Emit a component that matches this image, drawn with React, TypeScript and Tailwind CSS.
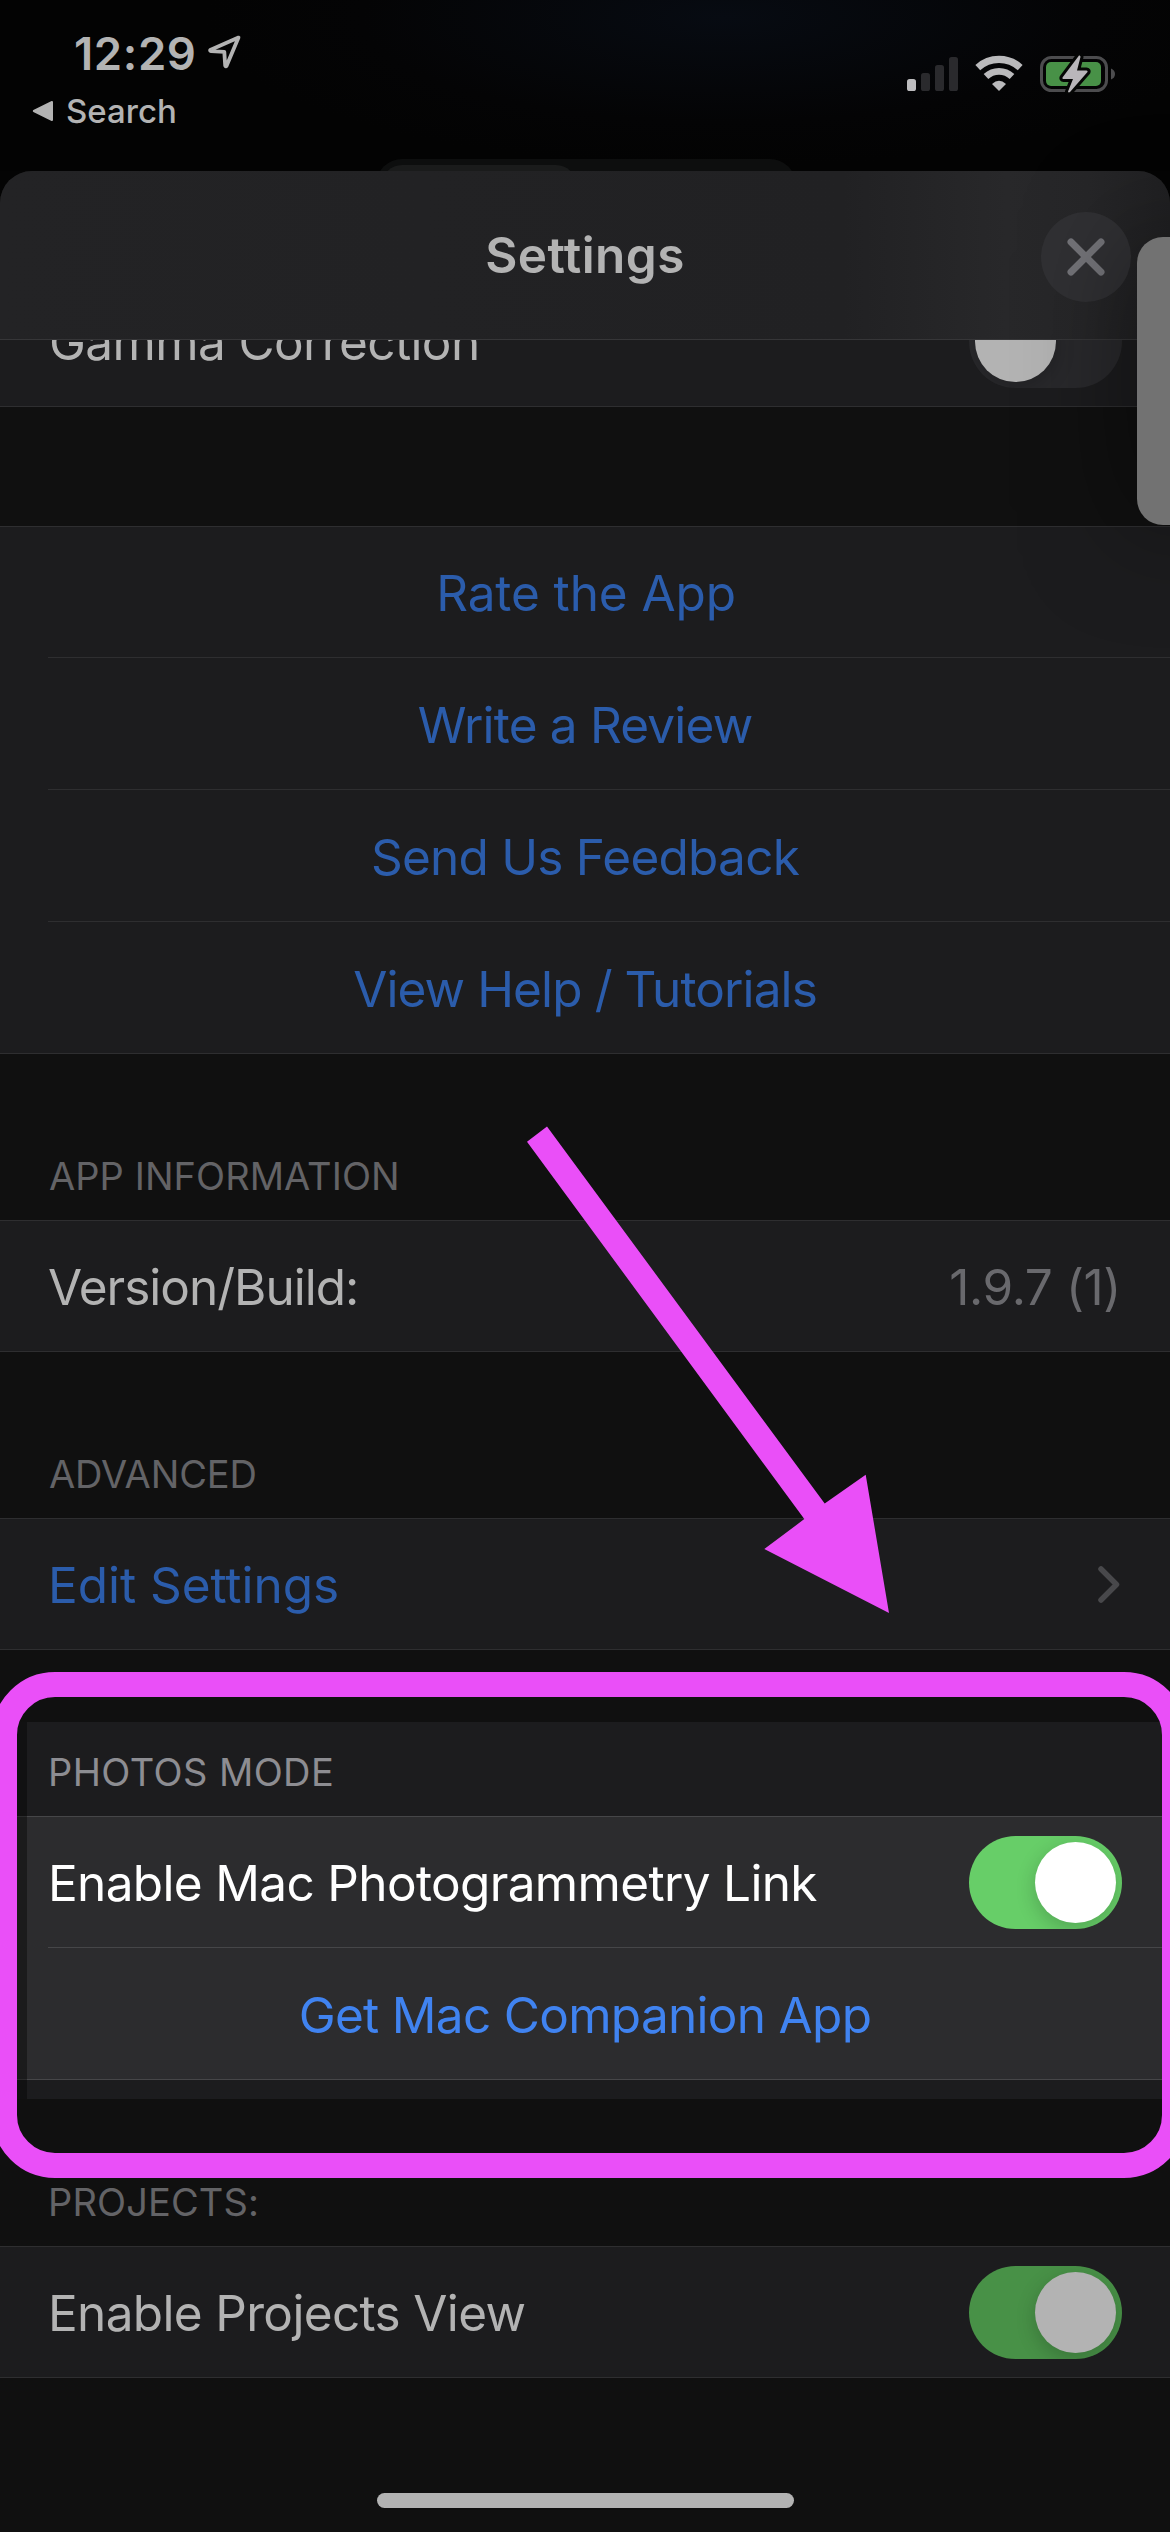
import type { ReactNode } from 'react'

function StatusBar() {
  return (
    <div className="flex h-[171px] items-start justify-between bg-[radial-gradient(ellipse_520px_150px_at_62%_10%,#070b12_0%,#040405_70%,#030303_100%)]">
      <div className="flex flex-col pt-[25px] text-[#b3b3b3]">
        <div className="flex h-[57px] items-center pl-[74px]">
          <span className="text-[45.5px] leading-[58px] font-semibold tracking-[0.6px]">12:29</span>
          <svg className="-mt-[3px] ml-[8px]" width="38" height="38" viewBox="0 0 38 38">
            <path
              d="M33.5 4.6 L5.2 17 Q4.8 18 6 18.2 L19.3 18.8 L20.2 32.6 Q20.8 33.8 21.6 32.8 Z"
              fill="none"
              stroke="#b3b3b3"
              strokeWidth="3.8"
              strokeLinejoin="round"
            />
          </svg>
        </div>
        <div className="flex h-[58px] items-center pl-[32px]">
          <svg width="22" height="22" viewBox="0 0 22 22" fill="#b3b3b3" stroke="#b3b3b3" strokeWidth="2" strokeLinejoin="round">
            <path d="M1.8 11 L20 2 V20 Z" />
          </svg>
          <span className="ml-[12px] text-[33px] leading-[40px] font-medium">Search</span>
        </div>
      </div>
      <div className="flex pt-[54px]">
        <svg className="mr-[16px]" width="52" height="39" viewBox="0 0 52 39">
          <rect x="0" y="25" width="9" height="12" rx="2.6" fill="#bdbdbf" />
          <rect x="14" y="19" width="9" height="18" rx="2.6" fill="#2a2a2d" />
          <rect x="28" y="11" width="9" height="26" rx="2.6" fill="#2a2a2d" />
          <rect x="42" y="3" width="9" height="34" rx="2.6" fill="#2a2a2d" />
        </svg>
        <svg className="mr-[15px]" width="50" height="39" viewBox="0 0 50 39" fill="none" stroke="#bababc">
          <path d="M2.8 13.6 A31.5 31.5 0 0 1 45.2 13.6" strokeWidth="7.2" />
          <path d="M11 22.6 A19 19 0 0 1 37 22.6" strokeWidth="6.8" />
          <path d="M17 30 Q24 23.6 31 30 L24 37 Z" fill="#bababc" stroke="none" />
        </svg>
        <svg className="mr-[53px]" width="77" height="40" viewBox="0 0 77 40">
          <rect x="1.5" y="3.5" width="65" height="33" rx="10" fill="none" stroke="#4c4c4e" strokeWidth="3" />
          <rect x="6" y="8" width="55" height="24" rx="5" fill="#489147" />
          <path d="M71 14.5 Q75 16 75 20 Q75 24 71 25.500 Z" fill="#4c4c4e" />
          <path
            d="M39 1.500 L22.500 23.500 Q22 25 23.500 25 L33 25 L28 37.500 Q28.500 39 30 38 L47.500 18 Q48 16.500 46.500 16.500 L37 16.500 L40.500 3 Q40.500 1 39 1.500 Z"
            fill="#b9b6ba"
            stroke="#050605"
            strokeWidth="6"
            paintOrder="stroke"
            strokeLinejoin="round"
          />
        </svg>
      </div>
    </div>
  )
}

function Toggle({ on, bright }: { on?: boolean; bright?: boolean }) {
  const track = on ? (bright ? 'bg-[#67ce68]' : 'bg-[#489147]') : 'bg-[#29292c]'
  const knob = bright ? 'bg-white' : 'bg-[#b3b3b3]'
  return (
    <div className={`mb-[1px] flex h-[93px] w-[153px] items-center overflow-hidden rounded-full p-[6px] ${track} ${on ? 'justify-end' : 'justify-start'}`}>
      <div className={`size-[81px] rounded-full shadow-[0_6px_20px_rgba(0,0,0,0.2)] ${knob}`} />
    </div>
  )
}

function Group({ bright, children }: { bright?: boolean; children: ReactNode }) {
  return (
    <div className={`border-y ${bright ? 'border-[#464648] bg-[#2c2c2e]' : 'border-[#2e2e30] bg-[#1c1c1e]'}`}>{children}</div>
  )
}

function LinkRow({ first, bright, className, children }: { first?: boolean; bright?: boolean; className: string; children: ReactNode }) {
  const line = bright ? 'border-[#464648]' : 'border-[#2e2e30]'
  return (
    <div className={first ? 'h-[130px]' : `ml-[48px] h-[132px] border-t ${line}`}>
      <div
        className={`flex h-full items-center justify-center pt-[2px] ${first ? '' : 'pr-[48px]'} ${bright ? 'text-[#4083f0]' : 'text-[#2b5cab]'} ${className}`}
      >
        {children}
      </div>
    </div>
  )
}

function Label({ className, children }: { className: string; children: ReactNode }) {
  return <div className={`flex items-end pb-[21px] text-[38px] leading-[46px] ${className}`}>{children}</div>
}

export default function App() {
  return (
    <div className="relative h-[2532px] w-[1170px] overflow-hidden bg-[#040404] font-['Inter',sans-serif] text-[49.5px] leading-[60px] whitespace-pre">
      <StatusBar />

      {/* Segmented control peeking out above the sheet */}
      <div className="absolute top-[159px] left-[376px] h-[60px] w-[420px] rounded-[26px] bg-[#0d0e0e] pt-[6px] pl-[6px]">
        <div className="h-[50px] w-[194px] rounded-[20px] bg-[#1a1b1b]" />
      </div>

      <div className="relative flex h-[2361px] flex-col overflow-hidden rounded-t-[32px] bg-[#101010]">
        <div className="flex h-[169px] shrink-0 items-center border-b border-[#363638] bg-[linear-gradient(90deg,#232325_0%,#212123_72%,#28282a_86%,#262628_93%,#202022_100%)]">
          <div className="w-[130px]" />
          <h1 className="flex-1 text-center font-semibold tracking-[0.4px] text-[#b3b3b3]">Settings</h1>
          <div className="flex w-[130px] pt-[3px] pl-[1px]">
            <div className="flex size-[90px] items-center justify-center rounded-full bg-[#303033]">
              <svg width="40" height="40" viewBox="0 0 40 40" stroke="#737378" strokeWidth="7" strokeLinecap="round">
                <path d="M5 5 L35 35 M35 5 L5 35" />
              </svg>
            </div>
          </div>
        </div>

        {/* Row scrolled partly under the header */}
        <div className="flex h-[67px] shrink-0 flex-col justify-end overflow-hidden border-b border-[#2e2e30] bg-[#1c1c1e]">
          <div className="flex h-[130px] shrink-0 items-center justify-between pt-[2px] pr-[48px] pl-[49px] text-[#b3b3b3]">
            <span className="tracking-[-0.62px]">Gamma Correction</span>
            <Toggle />
          </div>
        </div>

        <div className="h-[119px] shrink-0" />
        <Group>
          <LinkRow first className="pl-[2px] tracking-[-0.1px]">Rate the App</LinkRow>
          <LinkRow className="tracking-[-0.81px]">Write a Review</LinkRow>
          <LinkRow className="tracking-[-0.76px]">Send Us Feedback</LinkRow>
          <LinkRow className="tracking-[-0.89px]">View Help / Tutorials</LinkRow>
        </Group>

        <Label className="h-[166px] pl-[49px] tracking-[0.05px] text-[#636366]">APP INFORMATION</Label>
        <Group>
          <div className="flex h-[130px] items-center justify-between pt-[2px] pr-[49px] pl-[48px]">
            <span className="tracking-[-1px] text-[#b3b3b3]">Version/Build:</span>
            <span className="tracking-[-0.4px] text-[#69696d]">1.9.7 (1)</span>
          </div>
        </Group>

        <Label className="h-[166px] pl-[49px] tracking-[-0.13px] text-[#636366]">ADVANCED</Label>
        <Group>
          <div className="flex h-[130px] items-center justify-between pt-[2px] pr-[49px] pl-[48px]">
            <span className="tracking-[-0.05px] text-[#2b5cab]">Edit Settings</span>
            <svg width="24" height="40" viewBox="0 0 24 40" fill="none" stroke="#48484b" strokeWidth="5.500" strokeLinecap="round" strokeLinejoin="round">
              <path d="M4 4 L19.500 19.500 L4 35" />
            </svg>
          </div>
        </Group>

        <div className="h-[72px] shrink-0" />
        <div className="relative h-[377px] shrink-0 bg-[#1c1c1e]">
          <Label className="h-[94px] pl-[48px] tracking-[0.42px] text-[#8d8d92]">PHOTOS MODE</Label>
          <Group bright>
            <div className="flex h-[130px] items-center justify-between pt-[2px] pr-[48px] pl-[48px] text-white">
              <span className="tracking-[-0.66px]">Enable Mac Photogrammetry Link</span>
              <Toggle on bright />
            </div>
            <LinkRow bright className="tracking-[-0.7px]">Get Mac Companion App</LinkRow>
          </Group>
          {/* Dimmed strip left of the spotlight */}
          <div className="absolute inset-y-0 left-0 w-[27px] bg-black/38" />
        </div>

        <Label className="h-[147px] pl-[48px] tracking-[0.13px] text-[#636366]">PROJECTS:</Label>
        <Group>
          <div className="flex h-[130px] items-center justify-between pt-[2px] pr-[48px] pl-[48px] text-[#b3b3b3]">
            <span className="tracking-[-0.66px]">Enable Projects View</span>
            <Toggle on />
          </div>
        </Group>

        <div className="flex flex-1 items-end justify-center pb-[24px]">
          <div className="h-[15px] w-[417px] rounded-full bg-[#b3b3b3]" />
        </div>
      </div>

      {/* Floating handle on the right edge */}
      <div className="absolute top-[237px] left-[1137px] h-[288px] w-[80px] rounded-[26px] bg-[#727272] shadow-[0_0_110px_rgba(0,0,0,0.5)]" />

      {/* Annotation frame and arrow */}
      <div className="absolute top-[1672px] left-[-8px] h-[506px] w-[1195px] rounded-[63px] border-[25.5px] border-[#ea4ff8]" />
      <svg className="absolute top-[1120px] left-[520px]" width="380" height="500" viewBox="520 1120 380 500">
        <path d="M527 1141.700 L547 1126.500 L824.700 1503.600 L865.700 1474.700 L889 1613 L764.300 1549.100 L804.300 1519.100 Z" fill="#ea4ff8" />
      </svg>
    </div>
  )
}
